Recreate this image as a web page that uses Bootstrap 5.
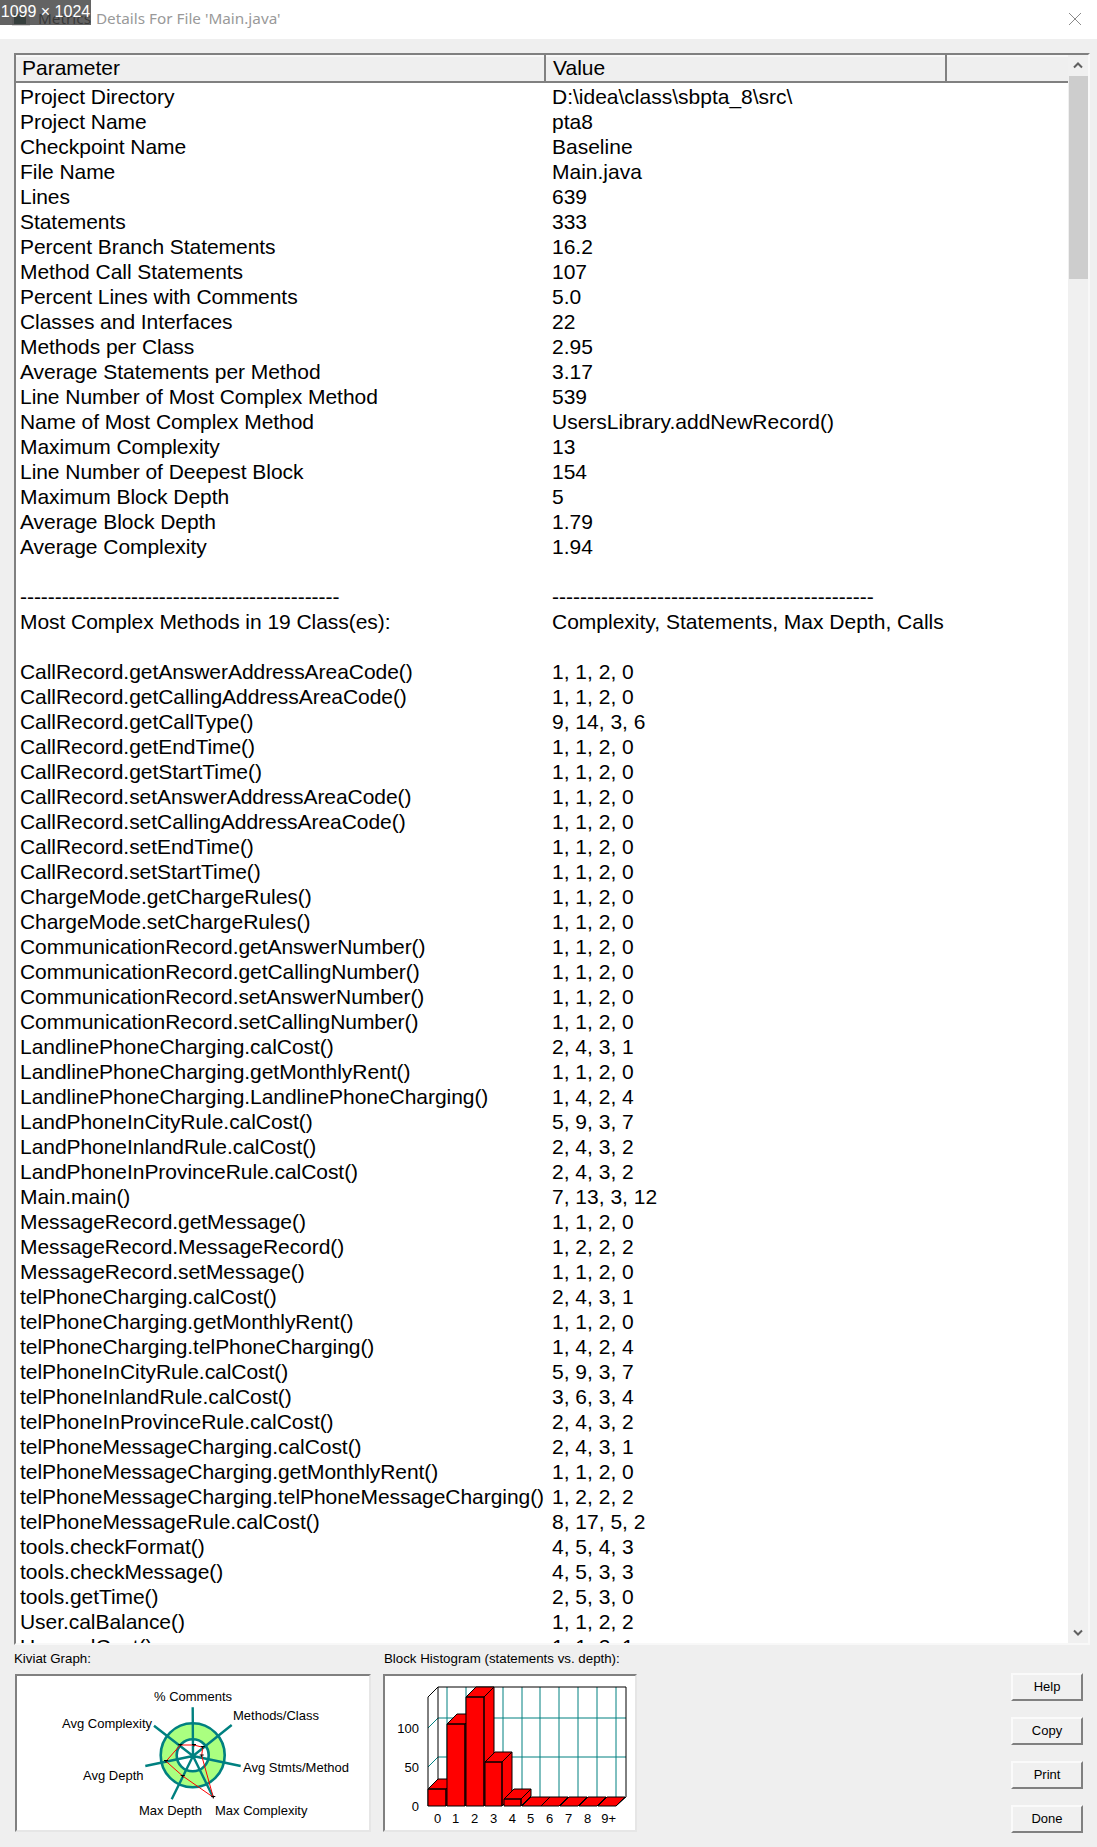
<!DOCTYPE html>
<html lang="en">
<head>
    <meta charset="UTF-8">
    <meta name="viewport" content="width=device-width, initial-scale=1.0">
    <title>Metrics Details</title>
    <link href="https://cdn.jsdelivr.net/npm/bootstrap@5.3.0/dist/css/bootstrap.min.css" rel="stylesheet">
    <script src="https://cdn.jsdelivr.net/npm/bootstrap@5.3.0/dist/js/bootstrap.bundle.min.js"></script>
    <style>
        html, body { height: 1847px; overflow: hidden; }
        body { background: #efefef; font-family: "Liberation Sans", Arial, sans-serif; color: #000; position: relative; }
        .size-tag { position: absolute; left: 0; top: 0; width: 91px; height: 25px; background: rgba(60, 60, 60, .8); color: #fff; font-size: 16px; line-height: 23px; text-align: center; }
        .title-strip { height: 39px; background: #fff; padding: 0 15px 2px 12px; }
        .title-text { font-family: "Noto Sans", sans-serif; font-size: 15.3px; color: #999; margin-left: 8px; }
        .title-text b { font-weight: 400; color: #333; margin-right: 1px; }
        .grid-frame { height: 1592px; margin: 14px 7px 0 14px; border: 2px solid #f8f8f8; border-top-color: #808080; border-left-color: #808080; background: #fff; overflow: hidden; }
        .grid-scroll { width: 1052px; height: 100%; overflow: hidden; }
        .metric-grid { table-layout: fixed; width: 1052px; font-size: 21px; line-height: 22px; letter-spacing: -.05px; background: #fff; }
        .metric-grid th { height: 27px; padding: 0 0 0 6px; background: #efefef; font-weight: 400; font-size: 21px; line-height: 24px; letter-spacing: 0; border-right: 2px solid #808080; border-bottom: 2px solid #808080; box-shadow: inset 0 2px 0 #f8f8f8; }
        .metric-grid th + th { padding-left: 7px; }
        .metric-grid th:last-child { border-right: 0; }
        .metric-grid td { height: 25px; padding: 3px 0 0 4px; white-space: nowrap; overflow: visible; }
        .metric-grid td + td { padding-left: 7px; letter-spacing: 0; }
        .fake-scroll { width: 20px; background: #f0f0f0; }
        .scroll-arrow { height: 21px; }
        .scroll-thumb { height: 203px; background: #cdcdcd; margin: 0 0 0 1px; }
        .bottom-area { margin: 0 0 0 14px; }
        .chart-label { font-size: 13.3px; line-height: 16px; height: 29px; padding-top: 6px; white-space: nowrap; }
        .hist-col .chart-label { padding-left: 1px; }
        .chart-box { height: 158px; background: #fff; border: 2px solid #e6e6e6; border-top-color: #808080; border-left-color: #808080; }
        .chart-box svg { display: block; font-size: 13px; }
        .kiviat-col { width: 369px; }
        .kiviat-box { width: 356px; margin-left: 1px; }
        .hist-box { width: 254px; }
        .btn-col { margin: 28px 14px 0 auto; }
        .btn.win-btn { width: 72px; height: 28px; padding: 0; border-radius: 0; background: #f0f0f0; color: #000; font-size: 13px; line-height: 24px; border: 2px solid #808080; border-top-color: #fafafa; border-left-color: #fafafa; }
    </style>
</head>
<body>
    <div class="title-strip d-flex align-items-center">
        <svg width="18" height="14" viewBox="0 0 18 14"><rect width="18" height="14" fill="#d9d9d9"/><rect x="2" y="2" width="12" height="10" fill="#1f4d40"/></svg>
        <span class="title-text"><b>Metrics</b> Details For File 'Main.java'</span>
        <svg class="ms-auto" width="14" height="14" viewBox="0 0 14 14"><path d="M1 1 13 13M13 1 1 13" stroke="#8a8a8a" stroke-width="1" fill="none"/></svg>
    </div>
    <div class="size-tag">1099 × 1024</div>

    <div class="grid-frame d-flex">
        <div class="grid-scroll">
            <table class="metric-grid">
                <colgroup><col style="width:529px"><col style="width:401px"><col style="width:122px"></colgroup>
                <thead><tr><th>Parameter</th><th>Value</th><th></th></tr></thead>
                <tbody>
                    <tr><td>Project Directory</td><td>D:\idea\class\sbpta_8\src\</td><td></td></tr>
                    <tr><td>Project Name</td><td>pta8</td><td></td></tr>
                    <tr><td>Checkpoint Name</td><td>Baseline</td><td></td></tr>
                    <tr><td>File Name</td><td>Main.java</td><td></td></tr>
                    <tr><td>Lines</td><td>639</td><td></td></tr>
                    <tr><td>Statements</td><td>333</td><td></td></tr>
                    <tr><td>Percent Branch Statements</td><td>16.2</td><td></td></tr>
                    <tr><td>Method Call Statements</td><td>107</td><td></td></tr>
                    <tr><td>Percent Lines with Comments</td><td>5.0</td><td></td></tr>
                    <tr><td>Classes and Interfaces</td><td>22</td><td></td></tr>
                    <tr><td>Methods per Class</td><td>2.95</td><td></td></tr>
                    <tr><td>Average Statements per Method</td><td>3.17</td><td></td></tr>
                    <tr><td>Line Number of Most Complex Method</td><td>539</td><td></td></tr>
                    <tr><td>Name of Most Complex Method</td><td>UsersLibrary.addNewRecord()</td><td></td></tr>
                    <tr><td>Maximum Complexity</td><td>13</td><td></td></tr>
                    <tr><td>Line Number of Deepest Block</td><td>154</td><td></td></tr>
                    <tr><td>Maximum Block Depth</td><td>5</td><td></td></tr>
                    <tr><td>Average Block Depth</td><td>1.79</td><td></td></tr>
                    <tr><td>Average Complexity</td><td>1.94</td><td></td></tr>
                    <tr><td></td><td></td><td></td></tr>
                    <tr><td>----------------------------------------------</td><td>----------------------------------------------</td><td></td></tr>
                    <tr><td>Most Complex Methods in 19 Class(es):</td><td>Complexity, Statements, Max Depth, Calls</td><td></td></tr>
                    <tr><td></td><td></td><td></td></tr>
                    <tr><td>CallRecord.getAnswerAddressAreaCode()</td><td>1, 1, 2, 0</td><td></td></tr>
                    <tr><td>CallRecord.getCallingAddressAreaCode()</td><td>1, 1, 2, 0</td><td></td></tr>
                    <tr><td>CallRecord.getCallType()</td><td>9, 14, 3, 6</td><td></td></tr>
                    <tr><td>CallRecord.getEndTime()</td><td>1, 1, 2, 0</td><td></td></tr>
                    <tr><td>CallRecord.getStartTime()</td><td>1, 1, 2, 0</td><td></td></tr>
                    <tr><td>CallRecord.setAnswerAddressAreaCode()</td><td>1, 1, 2, 0</td><td></td></tr>
                    <tr><td>CallRecord.setCallingAddressAreaCode()</td><td>1, 1, 2, 0</td><td></td></tr>
                    <tr><td>CallRecord.setEndTime()</td><td>1, 1, 2, 0</td><td></td></tr>
                    <tr><td>CallRecord.setStartTime()</td><td>1, 1, 2, 0</td><td></td></tr>
                    <tr><td>ChargeMode.getChargeRules()</td><td>1, 1, 2, 0</td><td></td></tr>
                    <tr><td>ChargeMode.setChargeRules()</td><td>1, 1, 2, 0</td><td></td></tr>
                    <tr><td>CommunicationRecord.getAnswerNumber()</td><td>1, 1, 2, 0</td><td></td></tr>
                    <tr><td>CommunicationRecord.getCallingNumber()</td><td>1, 1, 2, 0</td><td></td></tr>
                    <tr><td>CommunicationRecord.setAnswerNumber()</td><td>1, 1, 2, 0</td><td></td></tr>
                    <tr><td>CommunicationRecord.setCallingNumber()</td><td>1, 1, 2, 0</td><td></td></tr>
                    <tr><td>LandlinePhoneCharging.calCost()</td><td>2, 4, 3, 1</td><td></td></tr>
                    <tr><td>LandlinePhoneCharging.getMonthlyRent()</td><td>1, 1, 2, 0</td><td></td></tr>
                    <tr><td>LandlinePhoneCharging.LandlinePhoneCharging()</td><td>1, 4, 2, 4</td><td></td></tr>
                    <tr><td>LandPhoneInCityRule.calCost()</td><td>5, 9, 3, 7</td><td></td></tr>
                    <tr><td>LandPhoneInlandRule.calCost()</td><td>2, 4, 3, 2</td><td></td></tr>
                    <tr><td>LandPhoneInProvinceRule.calCost()</td><td>2, 4, 3, 2</td><td></td></tr>
                    <tr><td>Main.main()</td><td>7, 13, 3, 12</td><td></td></tr>
                    <tr><td>MessageRecord.getMessage()</td><td>1, 1, 2, 0</td><td></td></tr>
                    <tr><td>MessageRecord.MessageRecord()</td><td>1, 2, 2, 2</td><td></td></tr>
                    <tr><td>MessageRecord.setMessage()</td><td>1, 1, 2, 0</td><td></td></tr>
                    <tr><td>telPhoneCharging.calCost()</td><td>2, 4, 3, 1</td><td></td></tr>
                    <tr><td>telPhoneCharging.getMonthlyRent()</td><td>1, 1, 2, 0</td><td></td></tr>
                    <tr><td>telPhoneCharging.telPhoneCharging()</td><td>1, 4, 2, 4</td><td></td></tr>
                    <tr><td>telPhoneInCityRule.calCost()</td><td>5, 9, 3, 7</td><td></td></tr>
                    <tr><td>telPhoneInlandRule.calCost()</td><td>3, 6, 3, 4</td><td></td></tr>
                    <tr><td>telPhoneInProvinceRule.calCost()</td><td>2, 4, 3, 2</td><td></td></tr>
                    <tr><td>telPhoneMessageCharging.calCost()</td><td>2, 4, 3, 1</td><td></td></tr>
                    <tr><td>telPhoneMessageCharging.getMonthlyRent()</td><td>1, 1, 2, 0</td><td></td></tr>
                    <tr><td>telPhoneMessageCharging.telPhoneMessageCharging()</td><td>1, 2, 2, 2</td><td></td></tr>
                    <tr><td>telPhoneMessageRule.calCost()</td><td>8, 17, 5, 2</td><td></td></tr>
                    <tr><td>tools.checkFormat()</td><td>4, 5, 4, 3</td><td></td></tr>
                    <tr><td>tools.checkMessage()</td><td>4, 5, 3, 3</td><td></td></tr>
                    <tr><td>tools.getTime()</td><td>2, 5, 3, 0</td><td></td></tr>
                    <tr><td>User.calBalance()</td><td>1, 1, 2, 2</td><td></td></tr>
                    <tr><td>User.calCost()</td><td>1, 1, 2, 1</td><td></td></tr>
                </tbody>
            </table>
        </div>
        <div class="fake-scroll d-flex flex-column">
            <div class="scroll-arrow d-flex align-items-center justify-content-center">
                <svg width="10" height="7" viewBox="0 0 10 7"><path d="M1 5.5 5 1.5 9 5.5" stroke="#606060" stroke-width="2" fill="none"/></svg>
            </div>
            <div class="scroll-thumb"></div>
            <div class="scroll-arrow mt-auto d-flex align-items-center justify-content-center">
                <svg width="10" height="7" viewBox="0 0 10 7"><path d="M1 1.5 5 5.5 9 1.5" stroke="#606060" stroke-width="2" fill="none"/></svg>
            </div>
        </div>
    </div>

    <div class="bottom-area d-flex">
        <div class="kiviat-col">
            <div class="chart-label">Kiviat Graph:</div>
            <div class="chart-box kiviat-box">
                <svg width="352" height="154" viewBox="17 1676 352 154">
                    <circle cx="192.7" cy="1755.3" r="32" fill="#aaff80" stroke="#008080" stroke-width="2.6"/>
                    <circle cx="192.7" cy="1755.3" r="16" fill="#fff" stroke="#008080" stroke-width="2.6"/>
                    <path d="M193 1756 192.7 1707.3M193 1756 231.7 1725M193 1756 240.7 1766M193 1756 213 1797M193 1756 171.7 1799.3M193 1756 145.3 1766M193 1756 154 1725.7" stroke="#008080" stroke-width="2.4" fill="none"/>
                    <polygon points="194,1745 202.7,1747.3 201.7,1755.7 213.3,1797.3 182.7,1776 166,1761.3 180.3,1745" fill="none" stroke="#f00" stroke-width="1"/>
                    <path d="M192 1744.5h4M194 1744.5v2M200.7 1746.5h4M202.7 1746.5v2M199.7 1755h4M201.7 1755v2M211.3 1796.5h4M213.3 1796.5v2M180.7 1775.5h4M182.7 1775.5v2M164 1760.5h4M166 1760.5v2M178.3 1744.5h4M180.3 1744.5v2" stroke="#000" stroke-width="1" fill="none"/>
                    <text x="154" y="1701">% Comments</text>
                    <text x="233" y="1720">Methods/Class</text>
                    <text x="62" y="1728">Avg Complexity</text>
                    <text x="243" y="1772">Avg Stmts/Method</text>
                    <text x="83" y="1780">Avg Depth</text>
                    <text x="139" y="1815">Max Depth</text>
                    <text x="215" y="1815">Max Complexity</text>
                </svg>
            </div>
        </div>
        <div class="hist-col">
            <div class="chart-label">Block Histogram (statements vs. depth):</div>
            <div class="chart-box hist-box">
                <svg width="250" height="154" viewBox="385 1675 250 154">
                    <path d="M447 1686V1796M466 1686V1796M485 1686V1796M503 1686V1796M522 1686V1796M540 1686V1796M559 1686V1796M578 1686V1796M597 1686V1796M616 1686V1796M438 1717H626M438 1756H626M428 1727 438 1717M428 1766 438 1756" stroke="#008080" stroke-width="1" fill="none"/>
                    <path d="M428 1805V1696L438 1686H626V1796L616 1805M438 1686V1796" stroke="#000" stroke-width="1" fill="none"/>
                    <g fill="#f00" stroke="#000" stroke-width="1">
                        <path d="M428 1788h18v17h-18zM428 1788l10-10h18l-10 10zM446 1788l10-10v17l-10 10z"/>
                        <path d="M447 1723h18v82h-18zM447 1723l10-10h18l-10 10zM465 1723l10-10v82l-10 10z"/>
                        <path d="M466 1696h18v109h-18zM466 1696l10-10h18l-10 10zM484 1696l10-10v109l-10 10z"/>
                        <path d="M485 1761h17v44h-17zM485 1761l10-10h17l-10 10zM502 1761l10-10v44l-10 10z"/>
                        <path d="M504 1798h17v7h-17zM504 1798l10-10h17l-10 10zM521 1798l10-10v7l-10 10z"/>
                        <path d="M522 1805l9-9h19l-9 9z"/>
                        <path d="M541 1805l9-9h18l-9 9z"/>
                        <path d="M560 1805l9-9h18l-9 9z"/>
                        <path d="M579 1805l9-9h18l-9 9z"/>
                        <path d="M598 1805l9-9h18l-9 9z"/>
                    </g>
                    <g text-anchor="end">
                        <text x="419" y="1732">100</text>
                        <text x="419" y="1771">50</text>
                        <text x="419" y="1810">0</text>
                    </g>
                    <g text-anchor="middle">
                        <text x="437.7" y="1822">0</text>
                        <text x="455.7" y="1822">1</text>
                        <text x="474.7" y="1822">2</text>
                        <text x="493.7" y="1822">3</text>
                        <text x="512.3" y="1822">4</text>
                        <text x="530.7" y="1822">5</text>
                        <text x="549.7" y="1822">6</text>
                        <text x="568.7" y="1822">7</text>
                        <text x="587.7" y="1822">8</text>
                        <text x="608.7" y="1822">9+</text>
                    </g>
                </svg>
            </div>
        </div>
        <div class="btn-col d-flex flex-column gap-3">
            <button class="btn win-btn">Help</button>
            <button class="btn win-btn">Copy</button>
            <button class="btn win-btn">Print</button>
            <button class="btn win-btn">Done</button>
        </div>
    </div>
</body>
</html>
